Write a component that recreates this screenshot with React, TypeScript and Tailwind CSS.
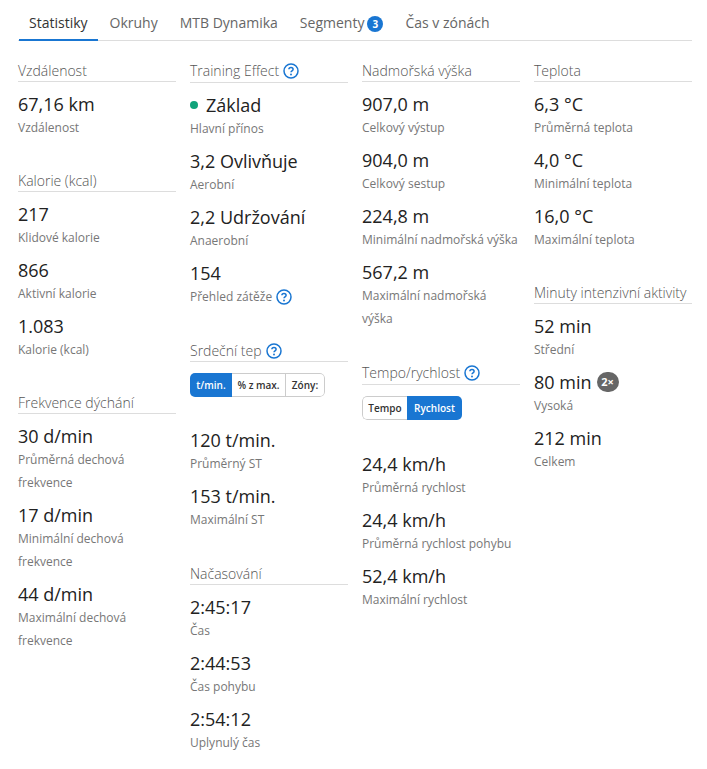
import type { ReactNode } from "react";

function HelpIcon() {
  return (
    <svg width="16" height="16" viewBox="0 0 16 16" fill="none" className="shrink-0">
      <circle cx="8" cy="8" r="7" stroke="#1976d2" strokeWidth="1.5" />
      <path
        d="M5.9 6.3c0-1.2 1-1.9 2.1-1.9s2.1.7 2.1 1.8c0 1.6-2.1 1.6-2.1 3.1"
        stroke="#1976d2"
        strokeWidth="1.5"
      />
      <circle cx="8" cy="11.5" r="0.95" fill="#1976d2" />
    </svg>
  );
}

function Heading({ children, help, tall }: { children: ReactNode; help?: boolean; tall?: boolean }) {
  return (
    <h3
      className={`flex items-center gap-1 border-b border-[#dddddd] text-sm leading-5 font-light text-[#555555] mb-3 ${
        tall ? "h-[22px] pb-px" : "h-[21px]"
      }`}
    >
      {children}
      {help && <HelpIcon />}
    </h3>
  );
}

function Stat({ value, label, extra, help }: { value: ReactNode; label: string; extra?: ReactNode; help?: boolean }) {
  return (
    <div className="mb-[11px]">
      <div className="flex items-center gap-[5px] text-lg leading-5 mb-0.5 text-[#222222]">
        {value}
        {extra}
      </div>
      <div className="flex items-center gap-1 text-xs leading-[23px] text-[#777777]">
        {label}
        {help && <HelpIcon />}
      </div>
    </div>
  );
}

function Toggle({ items, active, widths }: { items: string[]; active: number; widths: string[] }) {
  return (
    <div className="flex w-fit h-6 rounded-[5px] text-[10px] font-semibold overflow-hidden">
      {items.map((item, i) => (
        <div
          key={item}
          className={`flex items-center justify-center ${widths[i]} ${
            i === active
              ? "bg-[#1976d2] text-white"
              : `bg-white text-[#333333] border-y border-[#cccccc] ${i === 0 ? "border-l rounded-l-[5px]" : "border-r"} ${
                  i === items.length - 1 ? "rounded-r-[5px]" : ""
                }`
          }`}
        >
          {item}
        </div>
      ))}
    </div>
  );
}

function Tab({ children, active }: { children: ReactNode; active?: boolean }) {
  return (
    <div
      className={`flex items-center h-[41px] pt-[7px] px-[10px] -mb-px border-b-2 text-sm ${
        active ? "border-[#1976d2] text-[#333333]" : "border-transparent text-[#666666]"
      }`}
    >
      {children}
    </div>
  );
}

export default function App() {
  return (
    <div className="w-[707px] h-[769px] overflow-hidden bg-white pl-[18px] pr-[15px] font-['Open_Sans',sans-serif]">
      <div className="flex gap-[2px] border-b border-[#dddddd] pl-px h-[41px]">
        <Tab active>Statistiky</Tab>
        <Tab>Okruhy</Tab>
        <Tab>MTB Dynamika</Tab>
        <Tab>
          Segmenty
          <span className="ml-[3px] mt-[2px] flex w-4 h-4 items-center justify-center rounded-full bg-[#1976d2] text-[10px] font-bold text-white">
            3
          </span>
        </Tab>
        <Tab>Čas v zónách</Tab>
      </div>

      <div className="grid grid-cols-4 gap-x-[14px] pt-5">
        <div>
          <section className="mb-[32px]">
            <Heading>Vzdálenost</Heading>
            <Stat value="67,16 km" label="Vzdálenost" />
          </section>
          <section className="mb-[32px]">
            <Heading>Kalorie (kcal)</Heading>
            <Stat value="217" label="Klidové kalorie" />
            <Stat value="866" label="Aktivní kalorie" />
            <Stat value="1.083" label="Kalorie (kcal)" />
          </section>
          <section>
            <Heading>Frekvence dýchání</Heading>
            <Stat value="30 d/min" label="Průměrná dechová frekvence" />
            <Stat value="17 d/min" label="Minimální dechová frekvence" />
            <Stat value="44 d/min" label="Maximální dechová frekvence" />
          </section>
        </div>

        <div>
          <section className="mb-[33px]">
            <Heading help tall>
              Training Effect
            </Heading>
            <Stat
              value={
                <>
                  <span className="w-2 h-2 mr-[3px] rounded-full bg-[#10a37a]" />
                  Základ
                </>
              }
              label="Hlavní přínos"
            />
            <Stat value="3,2 Ovlivňuje" label="Aerobní" />
            <Stat value="2,2 Udržování" label="Anaerobní" />
            <Stat value="154" label="Přehled zátěže" help />
          </section>
          <section className="mb-[33px]">
            <Heading help>Srdeční tep</Heading>
            <div className="-mt-px mb-[33px]">
              <Toggle items={["t/min.", "% z max.", "Zóny:"]} active={0} widths={["w-[42px]", "w-[54px]", "w-[39px]"]} />
            </div>
            <Stat value="120 t/min." label="Průměrný ST" />
            <Stat value="153 t/min." label="Maximální ST" />
          </section>
          <section>
            <Heading>Načasování</Heading>
            <Stat value="2:45:17" label="Čas" />
            <Stat value="2:44:53" label="Čas pohybu" />
            <Stat value="2:54:12" label="Uplynulý čas" />
          </section>
        </div>

        <div>
          <section className="mb-[33px]">
            <Heading>Nadmořská výška</Heading>
            <Stat value="907,0 m" label="Celkový výstup" />
            <Stat value="904,0 m" label="Celkový sestup" />
            <Stat value="224,8 m" label="Minimální nadmořská výška" />
            <Stat value="567,2 m" label="Maximální nadmořská výška" />
          </section>
          <section>
            <Heading help tall>
              Tempo/rychlost
            </Heading>
            <div className="-mt-px mb-[34px]">
              <Toggle items={["Tempo", "Rychlost"]} active={1} widths={["w-[45px]", "w-[55px]"]} />
            </div>
            <Stat value="24,4 km/h" label="Průměrná rychlost" />
            <Stat value="24,4 km/h" label="Průměrná rychlost pohybu" />
            <Stat value="52,4 km/h" label="Maximální rychlost" />
          </section>
        </div>

        <div>
          <section className="mb-[32px]">
            <Heading>Teplota</Heading>
            <Stat value="6,3 °C" label="Průměrná teplota" />
            <Stat value="4,0 °C" label="Minimální teplota" />
            <Stat value="16,0 °C" label="Maximální teplota" />
          </section>
          <section>
            <Heading>Minuty intenzivní aktivity</Heading>
            <Stat value="52 min" label="Střední" />
            <Stat
              value="80 min"
              extra={
                <span className="flex w-[22px] h-[20px] items-center justify-center rounded-full bg-[#666666] text-[11px] font-bold text-white">
                  2×
                </span>
              }
              label="Vysoká"
            />
            <Stat value="212 min" label="Celkem" />
          </section>
        </div>
      </div>
    </div>
  );
}
